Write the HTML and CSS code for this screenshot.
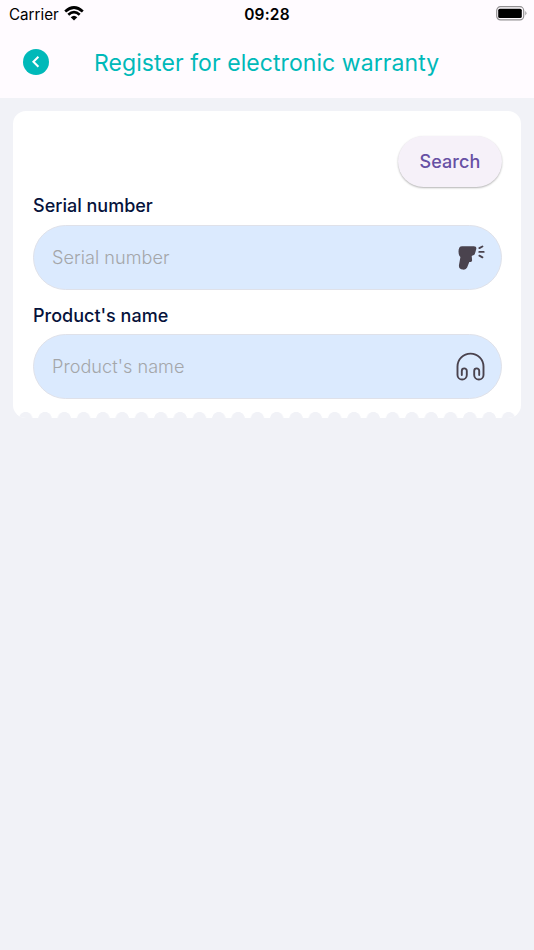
FILE: index.html
```html
<!DOCTYPE html>
<html lang="en">
<head>
<meta charset="utf-8">
<title>Register for electronic warranty</title>
<link rel="stylesheet" href="styles.css">
</head>
<body>
<header class="header">
  <div class="status">
    <div class="carrier">
      <span class="carrier-name">Carrier</span>
      <svg class="wifi" width="20" height="15" viewBox="0 0 20 15" fill="none" stroke="#000" stroke-width="2.7"><path d="M1.2 5.4Q10 -2.4 18.8 5.4M4.3 8.8Q10 3.6 15.7 8.8"/><path d="M6.7 11.2Q10 8.1 13.3 11.2L10 14.5Z" fill="#000" stroke="none"/></svg>
    </div>
    <time class="clock">09:28</time>
    <svg class="battery" width="31" height="15" viewBox="0 0 31 15"><rect x=".7" y=".7" width="27" height="13.2" rx="3.8" fill="none" stroke="#929092" stroke-width="1.2"/><rect x="2.2" y="2.7" width="23.6" height="9.4" rx="1.6"/><path d="M29.4 5.1Q31.4 7.3 29.4 9.5Z" fill="#929092"/></svg>
  </div>
  <div class="nav">
    <button class="back" aria-label="Back"><svg width="26" height="26" viewBox="0 0 26 26" fill="none" stroke="#fff" stroke-width="2"><path d="M15.4 7.8L10.4 12.8L15.4 17.8"/></svg></button>
    <h1 class="title">Register for electronic warranty</h1>
  </div>
</header>
<main class="card">
  <button class="search"><span>Search</span></button>
  <label class="label serial-label" for="serial">Serial number</label>
  <div class="field">
    <input class="input" id="serial" placeholder="Serial number">
    <svg class="icon" width="32" height="32" viewBox="0 0 32 32"><path d="M8.1 5.2H19.9Q23 5.2 22.2 8.2L21 12.6Q20.5 14.4 18.6 14.6L17.7 15L18.1 19Q18.2 20.6 16.6 20.9H15.3L13.1 26.5Q12 29 9 28.6Q4.4 28 5 24L6.4 16Q4.5 14.5 4.5 10.5Q4.5 5.2 8.1 5.2Z" fill="#4a434e"/><path d="M25.4 7.1L28.4 5.5M25.3 10.9H29.7M25.4 14.7L28.4 16.3" fill="none" stroke="#4a434e" stroke-width="1.9" stroke-linecap="round"/></svg>
  </div>
  <label class="label product-label" for="product">Product's name</label>
  <div class="field">
    <input class="input" id="product" placeholder="Product's name">
    <svg class="icon" width="32" height="32" viewBox="0 0 32 32" fill="none" stroke="#4a434e" stroke-width="1.9" stroke-linecap="round"><path d="M7.8 24V19.9A2.5 2.5 0 0 1 12.8 19.9V23.9A4.65 4.65 0 0 1 3.5 23.9V15.6A13 13 0 0 1 29.5 15.6V23.9A4.65 4.65 0 0 1 20.2 23.9V19.9A2.5 2.5 0 0 1 25.2 19.9V24"/></svg>
  </div>
  <div class="scallops"></div>
</main>
</body>
</html>
```
FILE: styles.css
```css
* { box-sizing: border-box; }
body { margin: 0; min-height: 950px; background: #f1f2f7; font-family: Inter, sans-serif; }
button { border: 0; padding: 0; font-family: inherit; }
.header { height: 98px; background: #fffbff; }
.status { height: 28px; padding: 0 7px 0 9px; display: grid; grid-template-columns: 1fr auto 1fr; align-items: center; color: #000; }
.carrier { display: flex; align-items: center; gap: 5px; font-size: 15.2px; }
.wifi { display: block; margin-top: -2px; }
.clock { font-size: 15.5px; font-weight: 600; letter-spacing: .2px; margin-right: 2px; }
.battery { justify-self: end; margin-top: -1px; }
.nav { height: 68px; display: flex; align-items: center; padding-left: 23px; }
.back { width: 26px; height: 26px; border-radius: 50%; background: #00b9b9; }
.back svg { display: block; }
.title { margin: 2px 0 0 45px; color: #00b9b9; font-size: 23px; font-weight: 400; line-height: 30px; letter-spacing: .07px; white-space: nowrap; }
.card { width: 508px; height: 307px; margin: 13px auto 0; padding: 25px 20px 0; border-radius: 13px; background: #fff; display: flex; flex-direction: column; overflow: hidden; }
.search { align-self: flex-end; width: 104px; height: 51px; margin-right: -1px; border-radius: 26px; background: #f6f1f9; color: #6750a4; box-shadow: 0 1px 2px rgba(0,0,0,.3); font-size: 18px; font-weight: 500; letter-spacing: .1px; flex: none; }
.label { color: #06123b; font-size: 18px; font-weight: 500; line-height: 24px; letter-spacing: 0; }
.serial-label { margin-top: 7px; }
.product-label { margin-top: 14px; }
.field { height: 65px; margin: 6.5px -.5px 0; padding: 0 15px 0 18.5px; border: 1.5px solid #dfe1e9; border-radius: 33px; background: #dbeafe; display: flex; align-items: center; flex: none; }
.input { flex: 1; min-width: 0; padding: 0 0 .6px; border: 0; outline: 0; background: transparent; font: 300 18.1px/24px Inter, sans-serif; letter-spacing: .04px; }
.input::placeholder { color: #a4a6a9; opacity: 1; }
.icon { flex: none; }
.scallops { height: 6.5px; margin: auto -17.3px 0; background: radial-gradient(circle at 9.66px 6.5px, #f1f2f7 6.2px, transparent 6.8px) 0 0 / 19.32px 6.5px; flex: none; }
```
